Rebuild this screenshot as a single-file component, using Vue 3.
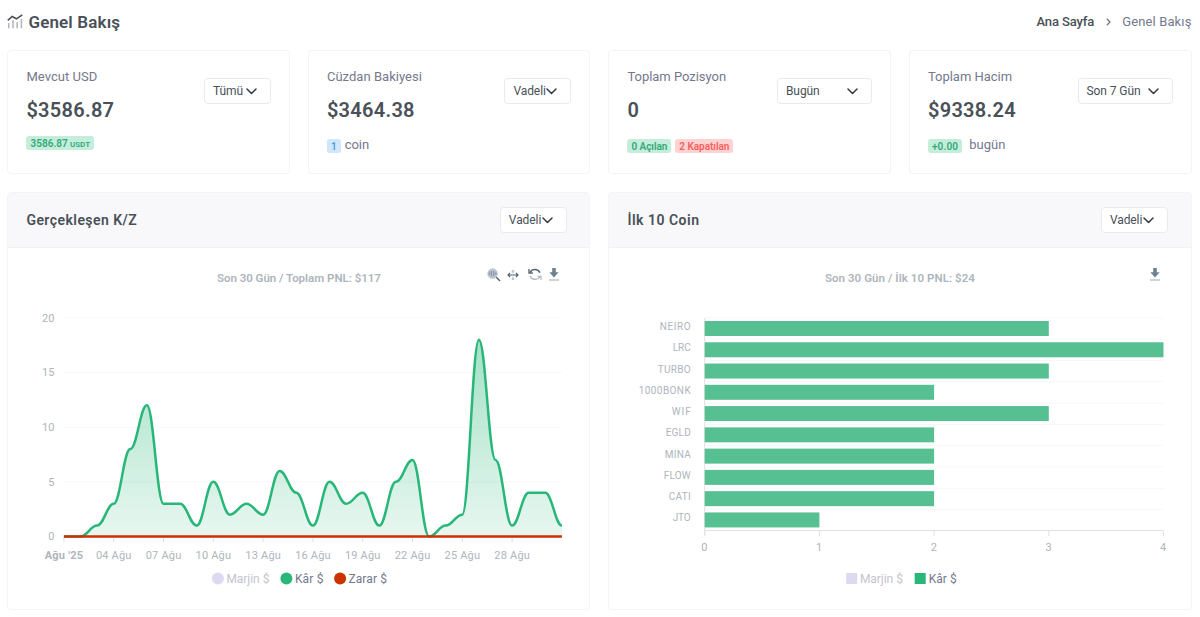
<template>
  <main class="page">
    <header class="topbar">
      <h1 class="title">
        <svg class="title-icon" viewBox="0 0 16 15">
          <path class="trend" d="M.8 6.4 5.2 2.5 9.4 4.8 15.3.9" />
          <path class="trend-bars" d="M1.8 9v5.3M6 6.2v8.1M10.2 8v6.3M14.4 5v9.3" />
        </svg>
        <span>Genel Bakış</span>
      </h1>
      <nav class="breadcrumb">
        <a class="home">Ana Sayfa</a>
        <svg class="crumb-arrow" viewBox="0 0 5 8"><path d="M.8.8 4 4 .8 7.2" /></svg>
        <span class="current">Genel Bakış</span>
      </nav>
    </header>

    <section class="stats">
      <article v-for="card in cards" :key="card.label" class="card stat">
        <div class="stat-info">
          <p class="stat-label" :class="card.key">{{ card.label }}</p>
          <p class="stat-value">{{ card.value }}</p>
          <p class="stat-foot" :class="card.key">
            <span v-for="badge in card.badges" :key="badge.text" class="badge" :class="badge.type">{{ badge.text }}<small v-if="badge.unit">{{ badge.unit }}</small></span>
            <span v-if="card.note" class="note">{{ card.note }}</span>
          </p>
        </div>
        <button class="select" :class="{ wide: card.wide }">
          <span>{{ card.filter }}</span>
          <svg class="chevron" viewBox="0 0 11 7"><path d="M1 1l4.5 4.5L10 1" /></svg>
        </button>
      </article>
    </section>

    <section class="charts">
      <article class="card chart-card">
        <div class="chart-head">
          <h2 class="pnl-title">Gerçekleşen K/Z</h2>
          <button class="select">
            <span>Vadeli</span>
            <svg class="chevron" viewBox="0 0 11 7"><path d="M1 1l4.5 4.5L10 1" /></svg>
          </button>
        </div>
        <div class="chart-body">
          <svg class="chart" viewBox="-0.4 0 581 361">
            <defs>
              <linearGradient id="profit" x1="0" y1="0" x2="0" y2="1">
                <stop offset="0" stop-color="#28b779" stop-opacity=".42" />
                <stop offset="1" stop-color="#28b779" stop-opacity=".11" />
              </linearGradient>
            </defs>
            <text class="chart-title" x="290.5" y="34" textLength="164">Son 30 Gün / Toplam PNL: $117</text>
            <g v-for="tick in [20, 15, 10, 5, 0]" :key="tick">
              <line class="grid" x1="55.5" x2="553.5" :y1="lineY(tick)" :y2="lineY(tick)" />
              <text class="axis end" x="46" :y="lineY(tick) + 3.7">{{ tick }}</text>
            </g>
            <g v-for="(label, i) in dates" :key="label">
              <line class="tick" :x1="lineX(i * 3)" :x2="lineX(i * 3)" y1="289" y2="294" />
              <text class="axis middle" :class="{ month: i === 0 }" :x="lineX(i * 3)" y="311" :textLength="i === 0 ? 38.5 : 35.5">{{ label }}</text>
            </g>
            <path :d="areaPath" fill="url(#profit)" />
            <path class="profit-line" :d="linePath" />
            <line class="loss-line" x1="55.5" x2="553.5" y1="288.6" y2="288.6" />
            <circle cx="209.5" cy="330.5" r="6" fill="#dcdaf1" />
            <text class="legend off" x="218" y="335" textLength="43">Marjin $</text>
            <circle cx="278" cy="330.5" r="6" fill="#28b779" />
            <text class="legend" x="286.5" y="335" textLength="28.5">Kâr $</text>
            <circle cx="331.7" cy="330.5" r="6" fill="#cc3102" />
            <text class="legend" x="340" y="335" textLength="38.5">Zarar $</text>
          </svg>
          <div class="toolbar">
            <svg class="tool-zoom" viewBox="0 0 15 15">
              <circle cx="6" cy="6" r="5.6" fill="#bcc5ce" />
              <path d="M2.5 4.8v2.4M4.7 3.2v5.6M7.3 3.2v5.6M9.5 4.8v2.4" stroke="#6e8192" stroke-width=".9" fill="none" />
              <path d="M10 10l4 4" stroke="#53616f" stroke-width="1.5" />
            </svg>
            <svg class="tool-pan" viewBox="0 0 12 12">
              <path d="M1 6h10M3 4 1 6l2 2M9 4l2 2-2 2" stroke="#566574" stroke-width="1.2" fill="none" />
              <path d="M6 1.2v3M6 7.8v3M5 2.5l1-1 1 1M5 9.5l1 1 1-1" stroke="#9ba8b4" fill="none" />
            </svg>
            <svg class="tool-reset" viewBox="0 0 15 14">
              <path d="M2.2 4.6A6 6 0 0 1 12.8 5" stroke="#566574" stroke-width="1.6" fill="none" />
              <path d="M1 1.2v4.2h4.2" stroke="#566574" stroke-width="1.4" fill="none" />
              <path d="M12.7 9.5A6 6 0 0 1 2.2 8.5M14 12.6V9h-3.8" stroke="#afb9c2" stroke-width="1.4" fill="none" />
            </svg>
            <svg class="tool-download" viewBox="0 0 10 13">
              <path d="M3.2 0h3.6v4.2H9.6L5 9.6.4 4.2h2.8z" fill="#6e8192" />
              <path d="M0 12h10" stroke="#aab7c2" stroke-width="1.2" />
            </svg>
          </div>
        </div>
      </article>

      <article class="card chart-card">
        <div class="chart-head">
          <h2 class="coin-title">İlk 10 Coin</h2>
          <button class="select">
            <span>Vadeli</span>
            <svg class="chevron" viewBox="0 0 11 7"><path d="M1 1l4.5 4.5L10 1" /></svg>
          </button>
        </div>
        <div class="chart-body">
          <svg class="chart" viewBox="-0.4 0 581 361">
            <text class="chart-title" x="290.5" y="34" textLength="150">Son 30 Gün / İlk 10 PNL: $24</text>
            <line v-for="n in 10" :key="n" class="grid" x1="95.5" x2="554" :y1="48.5 + n * 21.3" :y2="48.5 + n * 21.3" />
            <path class="tick" d="M95.3 70v217M95.3 282.5h458.7" />
            <g v-for="(coin, i) in coins" :key="coin.name">
              <rect x="95.3" :y="73 + i * 21.27" :width="coin.profit * 114.7" height="15" fill="#56c092" />
              <text class="coin end" x="81.3" :y="82 + i * 21.27" :textLength="coin.width">{{ coin.name }}</text>
            </g>
            <g v-for="n in [0, 1, 2, 3, 4]" :key="n">
              <line class="tick" :x1="95.3 + n * 114.7" :x2="95.3 + n * 114.7" y1="283" y2="288" />
              <text class="axis middle" :x="95 + n * 114.7" y="303">{{ n }}</text>
            </g>
            <rect x="236.8" y="325" width="11" height="11" fill="#dcdaf1" />
            <text class="legend off" x="250.5" y="335" textLength="43">Marjin $</text>
            <rect x="305.3" y="325" width="11" height="11" fill="#28b779" />
            <text class="legend" x="319.3" y="335" textLength="28">Kâr $</text>
          </svg>
          <div class="toolbar">
            <svg class="tool-download" viewBox="0 0 10 13">
              <path d="M3.2 0h3.6v4.2H9.6L5 9.6.4 4.2h2.8z" fill="#6e8192" />
              <path d="M0 12h10" stroke="#aab7c2" stroke-width="1.2" />
            </svg>
          </div>
        </div>
      </article>
    </section>
  </main>
</template>

<script setup>
import { computed } from 'vue'

const cards = [
  {
    key: 'usd',
    label: 'Mevcut USD',
    value: '$3586.87',
    filter: 'Tümü',
    badges: [{ text: '3586.87', unit: 'USDT', type: 'success' }]
  },
  {
    key: 'wallet',
    label: 'Cüzdan Bakiyesi',
    value: '$3464.38',
    filter: 'Vadeli',
    badges: [{ text: '1', type: 'info' }],
    note: 'coin'
  },
  {
    key: 'position',
    label: 'Toplam Pozisyon',
    value: '0',
    filter: 'Bugün',
    wide: true,
    badges: [
      { text: '0 Açılan', type: 'success' },
      { text: '2 Kapatılan', type: 'danger' }
    ]
  },
  {
    key: 'volume',
    label: 'Toplam Hacim',
    value: '$9338.24',
    filter: 'Son 7 Gün',
    wide: true,
    badges: [{ text: '+0.00', type: 'success' }],
    note: 'bugün'
  }
]

const dates = ["Ağu '25", '04 Ağu', '07 Ağu', '10 Ağu', '13 Ağu', '16 Ağu', '19 Ağu', '22 Ağu', '25 Ağu', '28 Ağu']

const profits = [
  0, 0, 1, 3, 8, 12, 3, 3, 1, 5, 2, 3, 2, 6, 4, 1,
  5, 3, 4, 1, 5, 7, 0, 1, 2, 18, 7, 1, 4, 4, 1
]

const coins = [
  { name: 'NEIRO', profit: 3, width: 31 },
  { name: 'LRC', profit: 4, width: 18 },
  { name: 'TURBO', profit: 3, width: 33 },
  { name: '1000BONK', profit: 2, width: 52 },
  { name: 'WIF', profit: 3, width: 19 },
  { name: 'EGLD', profit: 2, width: 25 },
  { name: 'MINA', profit: 2, width: 26 },
  { name: 'FLOW', profit: 2, width: 27 },
  { name: 'CATI', profit: 2, width: 22 },
  { name: 'JTO', profit: 1, width: 18 }
]

const step = 16.6

function lineX (day) {
  return 55.5 + day * step
}

function lineY (value) {
  return 288.5 - value * 10.93
}

// horizontal control points on both sides of each day
const linePath = computed(() => {
  const bend = step * 0.4
  return profits.map((value, i) => {
    const x = lineX(i)
    const y = lineY(value)
    if (i === 0) return `M${x} ${y}`
    return `C${x - step + bend} ${lineY(profits[i - 1])} ${x - bend} ${y} ${x} ${y}`
  }).join(' ')
})

const areaPath = computed(() => `${linePath.value} V288.5 H55.5 Z`)
</script>

<style>
body {
  background: #fff;
}
</style>

<style scoped>
.page {
  height: 617px;
  padding: 0 8.5px 0 7.4px;
  box-sizing: border-box;
  font-family: Roboto, "Noto Sans", sans-serif;
  color: #495057;
  overflow: hidden;
}
h1, h2, p {
  margin: 0;
}
.topbar {
  height: 50px;
  padding-bottom: 7px;
  box-sizing: border-box;
  display: flex;
  align-items: center;
  justify-content: space-between;
}
.title {
  display: flex;
  align-items: center;
  gap: 5px;
  font-size: 17px;
  font-weight: 600;
  letter-spacing: .15px;
  color: #495057;
}
.title-icon {
  width: 16px;
  height: 15px;
  fill: none;
}
.trend {
  stroke: #495057;
  stroke-width: 1.6;
}
.trend-bars {
  stroke: #b1b4b8;
  stroke-width: 1.5;
}
.breadcrumb {
  display: flex;
  align-items: center;
  font-size: 13px;
  letter-spacing: .13px;
}
.home {
  color: #495057;
  font-weight: 500;
  letter-spacing: -.12px;
}
.crumb-arrow {
  width: 5px;
  height: 8px;
  margin: 0 11px 0 12px;
  fill: none;
  stroke: #74788d;
  stroke-width: 1.3;
}
.current {
  color: #74788d;
}
.stats {
  display: grid;
  grid-template-columns: repeat(4, 1fr);
  gap: 18px;
}
.card {
  background: #fff;
  border: 1px solid #f4f4f6;
  border-radius: 4px;
  box-sizing: border-box;
}
.stat {
  height: 124px;
  padding: 16px 18px;
  display: flex;
  justify-content: space-between;
}
.stat-label {
  font-size: 13px;
  line-height: 19px;
  color: #74788d;
}
.stat-label.usd {
  letter-spacing: .05px;
}
.stat-label.wallet {
  letter-spacing: .03px;
}
.stat-label.position,
.stat-label.volume {
  letter-spacing: -.03px;
}
.stat-value {
  margin-top: 11px;
  font-size: 20px;
  line-height: 26px;
  font-weight: 600;
  letter-spacing: .28px;
  color: #495057;
}
.stat-foot {
  margin-top: 15px;
  height: 16px;
  display: flex;
  align-items: center;
  gap: 4px;
}
.stat-foot.usd {
  margin-top: 12px;
}
.badge {
  height: 14px;
  padding: 0 4px;
  border-radius: 3px;
  font-size: 10px;
  font-weight: 600;
  line-height: 15px;
  white-space: pre;
}
.usd .badge {
  letter-spacing: .05px;
}
.badge small {
  margin-left: 2px;
  font-size: 8px;
}
.success {
  background: #c4eedb;
  color: #34a878;
}
.info {
  background: #cfe6fb;
  color: #4a9de0;
}
.danger {
  background: #ffd2d2;
  color: #f5605e;
}
.position .badge {
  letter-spacing: -.05px;
}
.note {
  font-size: 13px;
  line-height: 16px;
  margin-top: -2px;
  color: #74788d;
}
.volume .badge {
  letter-spacing: .15px;
}
.volume .note {
  margin-left: 3px;
}
.select {
  width: 67px;
  height: 26px;
  margin: 11px 0 0;
  padding: 0 13px 0 8px;
  display: flex;
  align-items: center;
  justify-content: space-between;
  font-family: inherit;
  font-size: 12px;
  letter-spacing: -.08px;
  color: #495057;
  background: #fff;
  border: 1px solid #e9e9ef;
  border-radius: 4px;
  white-space: nowrap;
}
.select.wide {
  width: 95px;
}
.chevron {
  width: 11px;
  height: 7px;
  flex: none;
  fill: none;
  stroke: #343a40;
  stroke-width: 1.5;
  stroke-linecap: round;
  stroke-linejoin: round;
}
.charts {
  display: grid;
  grid-template-columns: repeat(2, 1fr);
  gap: 18px;
  margin-top: 18px;
}
.chart-card {
  height: 418px;
}
.chart-head {
  height: 55px;
  padding: 0 22.6px 0 18px;
  box-sizing: border-box;
  display: flex;
  align-items: center;
  justify-content: space-between;
  background: #f8f8fb;
  border-bottom: 1px solid #f1f1f4;
}
.chart-head h2 {
  font-size: 14px;
  font-weight: 600;
  color: #495057;
}
.chart-head .pnl-title {
  letter-spacing: .45px;
}
.chart-head .coin-title {
  letter-spacing: .5px;
}
.chart-head .select {
  margin: 0;
}
.chart-body {
  position: relative;
}
.chart {
  display: block;
  width: 581px;
  height: 361px;
}
.toolbar {
  position: absolute;
  top: 20px;
  right: 30.5px;
  display: flex;
  align-items: flex-start;
}
.tool-zoom {
  width: 14px;
  height: 14px;
  margin-right: 6px;
}
.tool-pan {
  width: 12px;
  height: 12px;
  margin: 1px 9px 0 0;
}
.tool-reset {
  width: 14px;
  height: 13px;
  margin-right: 7px;
}
.tool-download {
  width: 10px;
  height: 13px;
}
.chart-title {
  font-size: 11.5px;
  font-weight: 600;
  fill: #adb5bd;
  text-anchor: middle;
}
.axis {
  font-size: 11px;
  fill: #adb5bd;
}
.month {
  font-weight: 700;
}
.end {
  text-anchor: end;
}
.middle {
  text-anchor: middle;
}
.coin {
  font-size: 10px;
  fill: #adb5bd;
}
.grid {
  stroke: #f7f7f9;
}
.tick {
  fill: none;
  stroke: #e0e0e0;
}
.profit-line {
  fill: none;
  stroke: #28b779;
  stroke-width: 2.5;
}
.loss-line {
  stroke: #cc3102;
  stroke-width: 2.5;
}
.legend {
  font-size: 12px;
  fill: #74788d;
}
.legend.off {
  fill: #c3c4cd;
}
</style>
